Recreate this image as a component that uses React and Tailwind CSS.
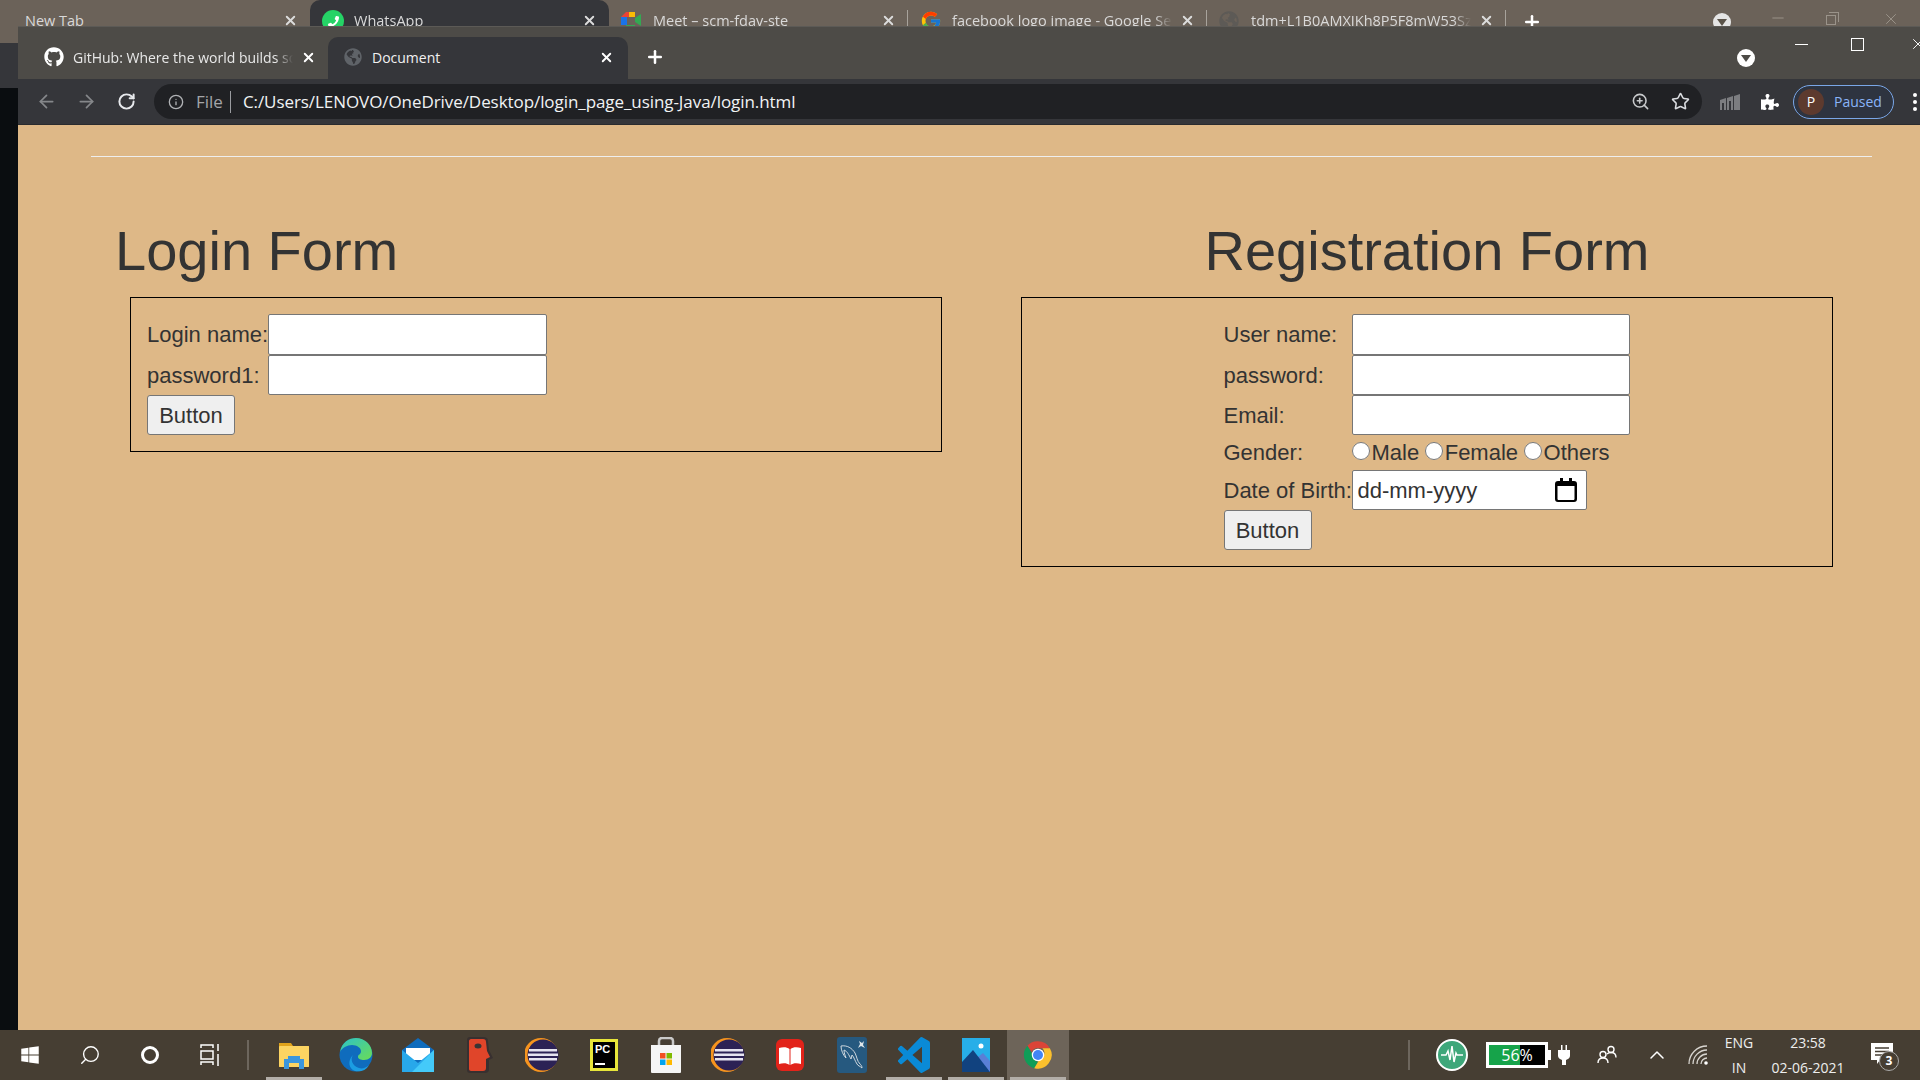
import React from "react";
import { FaGithub, FaPhoneAlt, FaWindows, FaPuzzlePiece, FaGlobeAmericas } from "react-icons/fa";
import { FcGoogle } from "react-icons/fc";
import { ArrowLeft, ArrowRight, RotateCw, Info, ZoomIn, Star, X, Plus, Minus, Search, ChevronUp } from "lucide-react";

function Meet() {
  return (
    <svg width="20" height="18" viewBox="0 0 20 18">
      <rect x="0" y="5" width="6" height="8" fill="#1a73e8" />
      <path d="M0 5 5 0h9v5H6v0z" fill="#ea4335" />
      <path d="M14 0v6l6-4v12l-6-4v8H5v-5h9" fill="#34a853" />
      <rect x="8" y="0" width="6" height="5" fill="#fbbc04" />
    </svg>
  );
}

function Chrome({ size = 30 }) {
  return (
    <svg width={size} height={size} viewBox="0 0 48 48">
      <path d="M24 2a22 22 0 0 1 19 11H24a11 11 0 0 0-10 6L7 9a22 22 0 0 1 17-7z" fill="#db4437" />
      <path d="M7 9l9.500 16.500A9 9 0 0 0 24 35l-6 10A22 22 0 0 1 7 9z" fill="#0f9d58" />
      <path d="M43 13a22 22 0 0 1-25 32l9-15a10 10 0 0 0 4-17z" fill="#fbc02d" />
      <circle cx="24" cy="24" r="10" fill="#fff" />
      <circle cx="24" cy="24" r="8" fill="#4285f4" />
    </svg>
  );
}

function Eclipse() {
  return (
    <svg width="34" height="36" viewBox="0 0 34 36">
      <circle cx="16" cy="18" r="17" fill="#f7941e" />
      <circle cx="18" cy="18" r="15.500" fill="#2c2255" />
      <rect x="4" y="12" width="28" height="2.500" fill="#e6e4ef" />
      <rect x="3" y="16.500" width="30" height="2.500" fill="#e6e4ef" />
      <rect x="4" y="21" width="28" height="2.500" fill="#e6e4ef" />
    </svg>
  );
}

function Explorer() {
  return (
    <svg width="30" height="28" viewBox="0 0 30 28">
      <path d="M0 2h12l2 3h16v21H0z" fill="#e0a31c" />
      <rect y="5" width="30" height="21" rx="1" fill="#fcd462" />
      <path d="M5 28v-10h4v-3h12v3h4v10h-5v-6H10v6z" fill="#3a96dd" />
    </svg>
  );
}

function Edge() {
  return (
    <svg width="34" height="36" viewBox="0 0 34 36">
      <defs>
        <linearGradient id="edgeTop" x1="0" y1="0" x2="1" y2="1">
          <stop offset="0" stopColor="#2cc3c9" />
          <stop offset="1" stopColor="#6bdc55" />
        </linearGradient>
      </defs>
      <circle cx="17" cy="18" r="16.500" fill="#0f6cbd" />
      <path d="M1 15C3 5 10 1 17 1c9 0 16 7 16 15 0 4-3 7-8 7-3 0-6-1-6-3 0-3 3-2 3-6 0-3-4-6-9-6S3 11 1 15z" fill="url(#edgeTop)" />
      <path d="M14 18c-3 4-1 11 6 13 3 1 7 0 10-3-3 6-9 7-14 6-6-2-8-10-2-16z" fill="#1b9de2" />
    </svg>
  );
}

function Mail() {
  return (
    <svg width="32" height="34" viewBox="0 0 32 34">
      <path d="M16 0 32 12v22H0V12z" fill="#0f6cbd" />
      <path d="M4 10h24v12H4z" fill="#fff" />
      <path d="M0 12l16 13 16-13v22H0z" fill="#28a8ea" />
      <path d="M32 12v22H10z" fill="#50d9ff" opacity="0.7" />
    </svg>
  );
}

function RedFace() {
  return (
    <svg width="26" height="36" viewBox="0 0 26 36">
      <path d="M3 0h13c3 0 5 1 5 4l1 9 4 8-4 2v10c0 2-2 3-4 3H3c-2 0-3-1-3-3V3c0-2 1-3 3-3z" fill="#383030" />
      <path d="M4 2h12c2 0 3 1 3 3l1 9 3 6-4 2v9c0 2-1 3-3 3H4c-1 0-2-1-2-2V4c0-1 1-2 2-2z" fill="#e0452a" />
      <ellipse cx="11" cy="9" rx="3.500" ry="2.500" fill="#3a3434" />
    </svg>
  );
}

function Store() {
  return (
    <svg width="30" height="36" viewBox="0 0 30 36">
      <path d="M8 8V4c0-2 1-3 3-3h8c2 0 3 1 3 3v4" fill="none" stroke="#c9c9c9" strokeWidth="2.500" />
      <path d="M0 8h30v27a1 1 0 0 1-1 1H1a1 1 0 0 1-1-1z" fill="#f5f5f5" />
      <rect x="9" y="16" width="5.500" height="5.500" fill="#f25022" />
      <rect x="15.500" y="16" width="5.500" height="5.500" fill="#7fba00" />
      <rect x="9" y="22.500" width="5.500" height="5.500" fill="#00a4ef" />
      <rect x="15.500" y="22.500" width="5.500" height="5.500" fill="#ffb900" />
    </svg>
  );
}

function Book() {
  return (
    <svg width="28" height="32" viewBox="0 0 28 32">
      <rect width="28" height="32" rx="6" fill="#e2231a" />
      <path d="M3 9c4-1 8-1 10.500 1v16C11 24 7 24 3 25z" fill="#fff" />
      <path d="M25 9c-4-1-8-1-10.500 1v16c2.500-2 6.500-2 10.500-1z" fill="#fff" />
    </svg>
  );
}

function Dolphin() {
  return (
    <svg width="30" height="36" viewBox="0 0 30 36">
      <rect width="30" height="36" rx="3" fill="#26597f" />
      <g fill="none" stroke="#cfd8df" strokeWidth="1">
        <path d="M4 9c6-1 11 2 14 7 2 4 2 8 5 11 1 1 2 2 2 4-2-2-4-2-5-4-2-3-3-7-5-9l-1 4c-2-4-4-8-7-9 0 3 1 5 2 8-3-3-5-8-5-12z" />
      </g>
      <path d="M22 4l3 2 2-2-1 4 2 3-4-2-3 2 2-4z" fill="#dfe6ea" />
    </svg>
  );
}

function Vscode() {
  return (
    <svg width="32" height="36" viewBox="0 0 24 24" preserveAspectRatio="none">
      <path
        d="M23.15 2.587L18.21.21a1.494 1.494 0 0 0-1.705.29l-9.46 8.63-4.12-3.128a.999.999 0 0 0-1.276.057L.327 7.261A1 1 0 0 0 .326 8.74L3.899 12 .326 15.26a1 1 0 0 0 .001 1.479L1.65 17.94a.999.999 0 0 0 1.276.057l4.12-3.128 9.46 8.63a1.492 1.492 0 0 0 1.704.29l4.942-2.377A1.5 1.5 0 0 0 24 20.06V3.939a1.5 1.5 0 0 0-.85-1.352zm-5.146 14.861L10.826 12l7.178-5.448v10.896z"
        fill="#0a8ad6"
      />
    </svg>
  );
}

function Photos() {
  return (
    <svg width="28" height="34" viewBox="0 0 28 34">
      <rect width="28" height="34" fill="#27aee8" />
      <circle cx="19" cy="8" r="2.500" fill="#fff" />
      <path d="M16 19l5-4 7 8v11H16z" fill="#5a7fd6" />
      <path d="M0 24 11 12l17 22H0z" fill="#11427f" />
    </svg>
  );
}

function Tab({ icon, title, active, sep }) {
  return (
    <div className={`relative flex h-[40px] w-[299px] shrink-0 items-start rounded-t-[10px] pl-[12px] pt-[9px] ${active ? "bg-[#35363a]" : ""}`}>
      <div className="flex h-[24px] w-[32px] shrink-0 items-center">{icon}</div>
      <span className="w-[220px] overflow-hidden whitespace-nowrap text-[14.500px] leading-[24px] text-[#d9d9d9] [mask-image:linear-gradient(to_right,black_92%,transparent)]">{title}</span>
      <X className="ml-[8px] mt-[4px] shrink-0 text-[#dcdcdc]" size={15} strokeWidth={3} />
      {sep && <div className="absolute right-0 top-[10px] h-[20px] w-px bg-[#a8a39c]" />}
    </div>
  );
}

function TaskIcon({ children, underline, active }) {
  return (
    <div className={`relative flex h-[50px] w-[62px] shrink-0 items-center justify-center ${active ? "bg-[#6d6459]" : ""}`}>
      {children}
      {underline && <div className="absolute bottom-0 left-[3px] right-[3px] h-[3px] bg-[#b3aea8]" />}
    </div>
  );
}

function Label({ children }) {
  return <div className="flex items-center whitespace-nowrap">{children}</div>;
}

function TextBox({ className }) {
  return <input type="text" className={`block rounded-[2px] border border-[#767676] bg-white ${className}`} />;
}

function FormButton() {
  return (
    <button className="h-[40px] w-[88px] rounded-[3px] border border-[#767676] bg-[#efefef] text-[22px] text-[#333]">
      Button
    </button>
  );
}

function Radio({ label }) {
  return (
    <label className="flex items-center">
      <input type="radio" name="gender" className="m-0 mb-[3px] h-[18px] w-[18px]" />
      <span className="ml-[2px] mr-[5.500px]">{label}</span>
    </label>
  );
}

export default function App() {
  return (
    <div className="flex h-[1080px] w-[1920px] flex-col overflow-hidden bg-[#463e33] font-['Open_Sans',sans-serif]">
      {/* desktop window behind */}
      <div className="flex h-[26px] shrink-0 overflow-hidden bg-[#6b6259]">
        <div className="flex w-[1600px] shrink-0">
          <div className="relative flex h-[40px] w-[310px] shrink-0 items-start pl-[25px] pt-[9px]">
            <span className="w-[258px] text-[14.500px] leading-[24px] text-[#d9d9d9]">New Tab</span>
            <X className="mt-[4px] text-[#dcdcdc]" size={15} strokeWidth={3} />
          </div>
          <Tab
            active
            title="WhatsApp"
            icon={
              <div className="flex h-[22px] w-[22px] items-center justify-center rounded-full bg-[#25d366]">
                <FaPhoneAlt size={11} className="-scale-x-100 text-white" />
              </div>
            }
          />
          <Tab sep title="Meet – scm-fdav-ste" icon={<Meet />} />
          <Tab sep title="facebook logo image - Google Search" icon={<FcGoogle size={22} />} />
          <Tab sep title="tdm+L1B0AMXJKh8P5F8mW53Sz" icon={<FaGlobeAmericas size={20} className="text-[#5d5a56]" />} />
          <Plus className="ml-[16px] mt-[12px] shrink-0 text-white" size={20} strokeWidth={3} />
        </div>
        <div className="ml-[113px] mt-[13px] flex h-[18px] w-[18px] shrink-0 items-center justify-center rounded-full bg-[#e5e5e5]">
          <div className="h-0 w-0 border-x-[5px] border-t-[7px] border-x-transparent border-t-[#5a5349]" />
        </div>
        <Minus className="ml-[38px] mt-[9px] shrink-0 text-[#9a938a]" size={18} strokeWidth={1.300} />
        <div className="relative ml-[39px] mt-[12px] h-[13px] w-[13px] shrink-0">
          <div className="absolute left-0 top-[3px] h-[10px] w-[10px] border border-[#9a938a]" />
          <div className="absolute right-0 top-0 h-[10px] w-[10px] border-r border-t border-[#9a938a]" />
        </div>
        <X className="ml-[43px] mt-[10px] shrink-0 text-[#9a938a]" size={18} strokeWidth={1.300} />
      </div>

      <div className="flex min-h-0 flex-1">
        {/* desktop sliver at the left */}
        <div className="flex w-[18px] shrink-0 flex-col bg-[#0a0d10]">
          <div className="h-[17px] bg-[#6b6259]" />
          <div className="h-[45px] bg-[#35363a]" />
        </div>

        <div className="flex min-w-0 flex-1 flex-col">
          {/* tab strip */}
          <div className="flex h-[53px] shrink-0 items-end overflow-hidden border-t border-[#5c5a56] bg-[#4d4b47]">
            <div className="flex h-[42px] w-[310px] shrink-0 items-center pb-[2px] pl-[26px]">
              <FaGithub size={20} className="mr-[9px] shrink-0 text-white" />
              <span className="w-[220px] overflow-hidden whitespace-nowrap text-[14px] text-[#e8e8e8] [mask-image:linear-gradient(to_right,black_92%,transparent)]">
                GitHub: Where the world builds software
              </span>
              <X size={15} strokeWidth={3} className="ml-[8px] shrink-0 text-white" />
            </div>
            <div className="flex h-[42px] w-[300px] shrink-0 items-center rounded-t-[10px] bg-[#35363a] pb-[2px] pl-[16px]">
              <FaGlobeAmericas size={18} className="mr-[10px] shrink-0 text-[#5f6368]" />
              <span className="w-[227px] shrink-0 text-[14px] text-[#f1f1f1]">Document</span>
              <X size={15} strokeWidth={3} className="shrink-0 text-white" />
            </div>
            <Plus size={20} strokeWidth={3} className="mb-[12px] ml-[17px] shrink-0 text-white" />
            <div className="mb-[12px] ml-[1072px] flex h-[18px] w-[18px] shrink-0 items-center justify-center rounded-full bg-white">
              <div className="h-0 w-0 border-x-[5px] border-t-[7px] border-x-transparent border-t-[#4d4b47]" />
            </div>
            <div className="mb-[34px] ml-[40px] h-px w-[13px] shrink-0 bg-white" />
            <div className="mb-[28px] ml-[43px] h-[13px] w-[13px] shrink-0 border border-white" />
            <X size={18} strokeWidth={1.250} className="mb-[26px] ml-[45px] shrink-0 text-white" />
          </div>

          {/* toolbar */}
          <div className="flex h-[46px] shrink-0 items-center border-b border-[#2a2b2e] bg-[#35363a]">
            <ArrowLeft size={21} className="ml-[18px] text-[#85878a]" />
            <ArrowRight size={21} className="ml-[19px] text-[#85878a]" />
            <RotateCw size={19} strokeWidth={2.500} className="ml-[20px] text-[#e8eaed]" />
            <div className="ml-[18px] flex h-[35px] w-[1548px] items-center rounded-full bg-[#202124] pl-[14px]">
              <Info size={16} className="text-[#b0b2b5]" />
              <span className="ml-[12px] text-[17px] text-[#a3a5a8]">File</span>
              <div className="ml-[7px] h-[22px] w-px bg-[#9a9ca0]" />
              <span className="ml-[12px] text-[17px] tracking-[-0.07px] text-[#f1f3f4]">
                C:/Users/LENOVO/OneDrive/Desktop/login_page_using-Java/login.html
              </span>
              <ZoomIn size={19} className="ml-auto text-[#c8cacc]" />
              <Star size={19} className="ml-[21px] mr-[12px] text-[#dadce0]" />
            </div>
            <svg width="20" height="16" viewBox="0 0 20 16" className="ml-[18px]">
              <path d="M0 6 6 4v12H4V9H2v7H0zM7 4l6-2v14h-2V7H9v9H7zM14 2l6-2v16h-6z" fill="#7c7d80" />
            </svg>
            <FaPuzzlePiece size={18} className="ml-[21px] text-white" />
            <div className="ml-[14px] flex h-[34px] w-[101px] items-center rounded-full border border-[#7aa7e8] bg-[#2e3440] pl-[4px]">
              <div className="flex h-[26px] w-[26px] items-center justify-center rounded-full bg-[#5d3a2e] text-[14px] text-white">P</div>
              <span className="ml-[10px] text-[14px] text-[#8ab4f8]">Paused</span>
            </div>
            <div className="ml-[19px] flex flex-col gap-[3px]">
              <div className="h-[4px] w-[4px] rounded-full bg-white" />
              <div className="h-[4px] w-[4px] rounded-full bg-white" />
              <div className="h-[4px] w-[4px] rounded-full bg-white" />
            </div>
          </div>

          {/* page */}
          <main className="min-h-0 flex-1 bg-[#deb887] pl-[73px] pt-[31px] font-['Liberation_Sans',Arial,sans-serif] text-[22px] text-[#333]">
            <hr className="h-px w-[1781px] border-0 bg-[#eee]" />
            <div className="mt-[62px] flex items-start pl-[24px]">
              <section className="w-[827px] shrink-0">
                <h1 className="text-[56px] leading-[64px]">Login Form</h1>
                <div className="ml-[15px] mt-[14px] flex w-[812px] justify-start border border-black pb-[16px] pl-[16px] pt-[16px]">
                  <div className="grid grid-cols-[121px_279px]">
                    <Label>Login name:</Label>
                    <TextBox className="h-[41px] w-[279px]" />
                    <Label>password1:</Label>
                    <TextBox className="h-[40px] w-[279px]" />
                    <div className="col-span-2">
                      <FormButton />
                    </div>
                  </div>
                </div>
              </section>

              <section className="ml-[79px] w-[812px] shrink-0">
                <h1 className="text-center text-[56px] leading-[64px]">Registration Form</h1>
                <div className="mt-[14px] flex justify-center border border-black pb-[16px] pt-[16px]">
                  <div className="grid grid-cols-[129px_278px]">
                    <Label>User name:</Label>
                    <TextBox className="h-[41px] w-[278px] -ml-px" />
                    <Label>password:</Label>
                    <TextBox className="h-[40px] w-[278px] -ml-px" />
                    <Label>Email:</Label>
                    <TextBox className="h-[40px] w-[278px] -ml-px" />
                    <Label>Gender:</Label>
                    <div className="-ml-px flex h-[35px] items-center">
                      <Radio label="Male" />
                      <Radio label="Female" />
                      <Radio label="Others" />
                    </div>
                    <Label>Date of Birth:</Label>
                    <div className="-ml-px flex h-[40px] w-[235px] items-center justify-between rounded-[2px] border border-[#767676] bg-white pl-[5px] pr-[9px]">
                      <span>dd-mm-yyyy</span>
                      <svg width="22" height="24" viewBox="0 0 22 24">
                        <path d="M5 0h3v3h6V0h3v3h2a3 3 0 0 1 3 3v15a3 3 0 0 1-3 3H3a3 3 0 0 1-3-3V6a3 3 0 0 1 3-3h2zM2.500 8v13c0 .5.500 1 1 1h15c.500 0 1-.5 1-1V8z" fill="#000" />
                      </svg>
                    </div>
                    <div className="col-span-2">
                      <FormButton />
                    </div>
                  </div>
                </div>
              </section>
            </div>
          </main>
        </div>
      </div>

      {/* taskbar */}
      <footer className="flex h-[50px] shrink-0 items-center bg-[#463e33] text-white">
        <div className="flex h-[50px] w-[60px] items-center justify-center"><FaWindows size={20} /></div>
        <div className="flex h-[50px] w-[60px] items-center justify-center"><Search size={22} strokeWidth={1.500} className="-scale-x-100" /></div>
        <div className="flex h-[50px] w-[60px] items-center justify-center"><div className="h-[18px] w-[18px] rounded-full border-[3px] border-white" /></div>
        <div className="flex h-[50px] w-[60px] items-center justify-center">
          <svg width="20" height="22" viewBox="0 0 20 22" fill="none" stroke="#fff" strokeWidth="1.500">
            <path d="M1 4V1h12v3M1 7h12v8H1zM1 21v-3h12v3M18 0v7M18 10v12" />
          </svg>
        </div>
        <div className="ml-[7px] h-[30px] w-[2px] bg-[#6d665d]" />
        <div className="ml-[14px] flex">
          <TaskIcon underline><Explorer /></TaskIcon>
          <TaskIcon><Edge /></TaskIcon>
          <TaskIcon><Mail /></TaskIcon>
          <TaskIcon><RedFace /></TaskIcon>
          <TaskIcon><Eclipse /></TaskIcon>
          <TaskIcon>
            <div className="flex h-[32px] w-[28px] flex-col border-[3px] border-[#e8e63a] bg-black pl-[2px] pt-[1px] font-['Liberation_Sans',sans-serif] text-[11px] font-bold leading-[12px] text-white">
              PC
              <div className="mt-[8px] h-[2px] w-[10px] bg-white" />
            </div>
          </TaskIcon>
          <TaskIcon><Store /></TaskIcon>
          <TaskIcon><Eclipse /></TaskIcon>
          <TaskIcon><Book /></TaskIcon>
          <TaskIcon><Dolphin /></TaskIcon>
          <TaskIcon underline><Vscode /></TaskIcon>
          <TaskIcon underline><Photos /></TaskIcon>
          <TaskIcon active underline><Chrome /></TaskIcon>
        </div>

        <div className="ml-auto flex items-center">
          <div className="h-[30px] w-[2px] bg-[#6d665d]" />
          <div className="ml-[26px] flex h-[32px] w-[32px] items-center justify-center rounded-full border-2 border-white bg-[#3ea77a]">
            <svg width="22" height="20" viewBox="0 0 22 20" fill="none" stroke="#fff" strokeWidth="1.500">
              <path d="M0 10h5l2-4 2 9 2-14 2 16 2-9 1 2h6" />
            </svg>
          </div>
          <div className="ml-[18px] flex h-[26px] w-[62px] items-center border-[3px] border-white bg-black">
            <div className="relative flex h-full w-full">
              <div className="h-full w-[56%] bg-[#16a34a]" />
              <span className="absolute inset-0 text-center text-[16px] leading-[20px] text-white">56%</span>
            </div>
          </div>
          <div className="h-[10px] w-[3px] bg-white" />
          <svg width="12" height="20" viewBox="0 0 12 20" className="ml-[7px]">
            <path d="M3 0h1.500v5h3V0H9v5h3v6c0 2-2 3-4 4v5H4v-5c-2-1-4-2-4-4V5h3z" fill="#fff" />
          </svg>
          <svg width="20" height="20" viewBox="0 0 20 20" fill="none" stroke="#fff" strokeWidth="1.400" className="ml-[27px]">
            <circle cx="14" cy="4.500" r="3" />
            <circle cx="6" cy="9.500" r="3" />
            <path d="M1 18c0-3 2-5 5-5s5 2 5 5M10 9c1-1 2-1.500 4-1.500 3 0 5 2 5 5" />
          </svg>
          <ChevronUp size={24} strokeWidth={1.500} className="ml-[28px] text-white" />
          <svg width="22" height="20" viewBox="0 0 22 20" fill="none" stroke="#d8d5d0" strokeWidth="1.300" className="ml-[19px]">
            <path d="M1 19A18 18 0 0 1 19 1M5 19A14 14 0 0 1 19 5M9 19a10 10 0 0 1 10-10M13 19a6 6 0 0 1 6-6" />
            <circle cx="18" cy="18" r="1.800" fill="#fff" stroke="none" />
          </svg>
          <div className="ml-[11px] flex w-[36px] flex-col items-center text-[14px] leading-[25px] text-[#eee]">
            <span>ENG</span>
            <span>IN</span>
          </div>
          <div className="ml-[7px] flex w-[88px] flex-col items-center text-[14px] leading-[25px] text-[#eee]">
            <span>23:58</span>
            <span>02-06-2021</span>
          </div>
          <div className="relative ml-[19px] mr-[27px] h-[24px] w-[22px]">
            <svg width="22" height="24" viewBox="0 0 22 24">
              <path d="M0 0h22v17H9l-3 4v-4H0z" fill="#fff" />
              <path d="M4 5h14M4 8.500h14M4 12h9" stroke="#463e33" strokeWidth="1.300" />
            </svg>
            <div className="absolute -bottom-[4px] -right-[6px] flex h-[20px] w-[20px] items-center justify-center rounded-full border border-[#aaa] bg-[#463e33] text-[12px] font-bold leading-none text-white">3</div>
          </div>
        </div>
      </footer>
    </div>
  );
}
